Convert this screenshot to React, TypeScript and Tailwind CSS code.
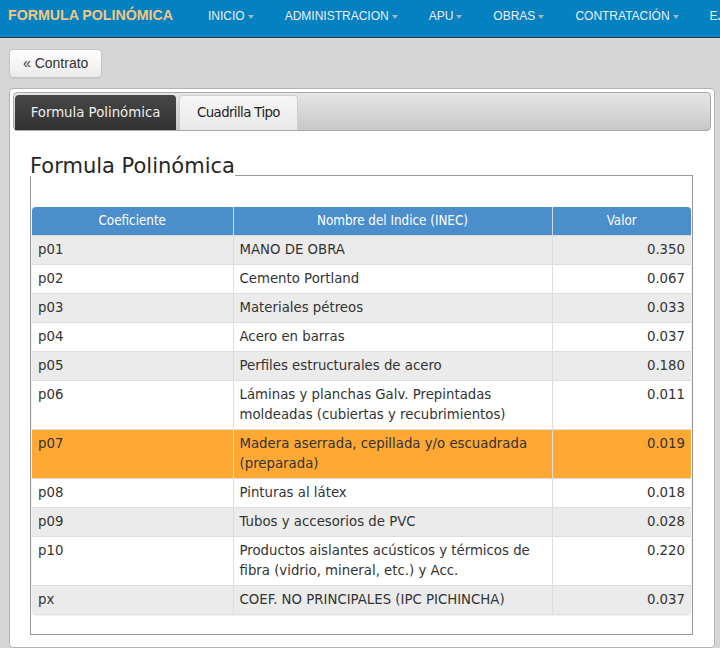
// Formula polinómica page: top navbar, back button, tabbed panel with the
// coefficient table inside a legend box.

type Row = { code: string; name: string; value: string; hot?: boolean };

const NAV = ["INICIO", "ADMINISTRACION", "APU", "OBRAS", "CONTRATACIÓN", "EJECUCIÓN"];

const ROWS: Row[] = [
  { code: "p01", name: "MANO DE OBRA", value: "0.350" },
  { code: "p02", name: "Cemento Portland", value: "0.067" },
  { code: "p03", name: "Materiales pétreos", value: "0.033" },
  { code: "p04", name: "Acero en barras", value: "0.037" },
  { code: "p05", name: "Perfiles estructurales de acero", value: "0.180" },
  { code: "p06", name: "Láminas y planchas Galv. Prepintadas moldeadas (cubiertas y recubrimientos)", value: "0.011" },
  { code: "p07", name: "Madera aserrada, cepillada y/o escuadrada (preparada)", value: "0.019", hot: true },
  { code: "p08", name: "Pinturas al látex", value: "0.018" },
  { code: "p09", name: "Tubos y accesorios de PVC", value: "0.028" },
  { code: "p10", name: "Productos aislantes acústicos y térmicos de fibra (vidrio, mineral, etc.) y Acc.", value: "0.220" },
  { code: "px", name: "COEF. NO PRINCIPALES (IPC PICHINCHA)", value: "0.037" },
];

function Navbar() {
  return (
    <nav className="flex h-[38px] items-center overflow-hidden border-b border-[#2b3a44] bg-[#0381c1] pb-[5px] font-['Liberation_Sans',Arial,sans-serif]">
      <div className="shrink-0 pl-[8px] text-[14.2px] font-bold text-[#f5c57f]">FORMULA POLINÓMICA</div>
      <ul className="ml-[20px] flex shrink-0">
        {NAV.map((item) => (
          <li key={item} className="flex items-center pl-[15px] pr-[16px] text-[12px] text-[#eeeeee]">
            {item}
            <span className="ml-[3px] mt-[1px] h-0 w-0 border-x-[3.5px] border-t-[4px] border-x-transparent border-t-[#a9b4bc]" />
          </li>
        ))}
      </ul>
    </nav>
  );
}

function Tabs() {
  return (
    <div className="flex h-[39px] items-end gap-[3px] rounded-[4px] border border-[#a9a9a9] bg-gradient-to-b from-[#e6e6e6] to-[#c8c8c8] px-[1px]">
      <div className="flex h-[35px] w-[161px] items-center justify-center rounded-t-[4px] bg-gradient-to-b from-[#474747] to-[#323232] text-[13.3px] text-[#eeeeee]">
        Formula Polinómica
      </div>
      <div className="flex h-[35px] w-[119px] items-center justify-center rounded-t-[4px] border border-b-0 border-[#d0d0d0] bg-gradient-to-b from-[#f6f6f6] to-[#e9e9e9] text-[13.3px] tracking-[-0.6px] text-[#222]">
        Cuadrilla Tipo
      </div>
    </div>
  );
}

function CoefTable() {
  return (
    <div className="overflow-hidden rounded-[4px] shadow-[0_1px_2px_rgba(0,0,0,0.18)]">
      <table className="w-full table-fixed border-collapse text-[13.3px] leading-[20px] text-[#333]">
        <colgroup>
          <col className="w-[201px]" />
          <col className="w-[319px]" />
          <col />
        </colgroup>
        <thead>
          <tr className="h-[28px] bg-[#4a8ecb] font-['DejaVu_Sans_Condensed',sans-serif] text-[13.3px] text-white">
            <th className="font-normal">Coeficiente</th>
            <th className="border-l border-[#c9dcee] font-normal">Nombre del Indice (INEC)</th>
            <th className="border-l border-[#c9dcee] font-normal">Valor</th>
          </tr>
        </thead>
        <tbody>
          {ROWS.map((r, i) => {
            const bg = r.hot ? "bg-[#ffa834]" : i % 2 === 0 ? "bg-[#ebebeb]" : "bg-white";
            return (
              <tr key={r.code} className={`${bg} border-t border-[#dddddd] align-top`}>
                <td className="px-[6px] py-[4px]">{r.code}</td>
                <td className="border-l border-[#dddddd] px-[6px] py-[4px]">{r.name}</td>
                <td className="border-l border-[#dddddd] px-[6px] py-[4px] text-right">{r.value}</td>
              </tr>
            );
          })}
        </tbody>
      </table>
    </div>
  );
}

export default function App() {
  return (
    <div className="min-h-screen bg-[#d6d6d6] font-['DejaVu_Sans',Verdana,sans-serif]">
      <Navbar />
      <div className="pl-[9px] pr-[5px] pt-[11px]">
        <button className="h-[29px] rounded-[4px] border border-[#c4c4c4] bg-gradient-to-b from-white to-[#ebebeb] px-[13px] font-['Liberation_Sans',Arial,sans-serif] text-[14px] text-[#333] shadow-[0_1px_1px_rgba(0,0,0,0.06)]">
          « Contrato
        </button>

        <div className="mt-[10px] rounded-[4px] border border-[#b4b4b4] bg-white p-[3px] pb-[12px]">
          <Tabs />
          <div className="pl-[17px] pr-[18px]">
            <div className="mt-[25px] flex h-[20px] items-end">
              <span className="text-[21px] leading-[20px] whitespace-nowrap text-[#262626]">Formula Polinómica</span>
              <div className="flex-1 border-b border-[#999]" />
            </div>
            <div className="border-x border-b border-[#999] px-[1px] pb-[20px] pt-[31px]">
              <CoefTable />
            </div>
          </div>
        </div>
      </div>
    </div>
  );
}
